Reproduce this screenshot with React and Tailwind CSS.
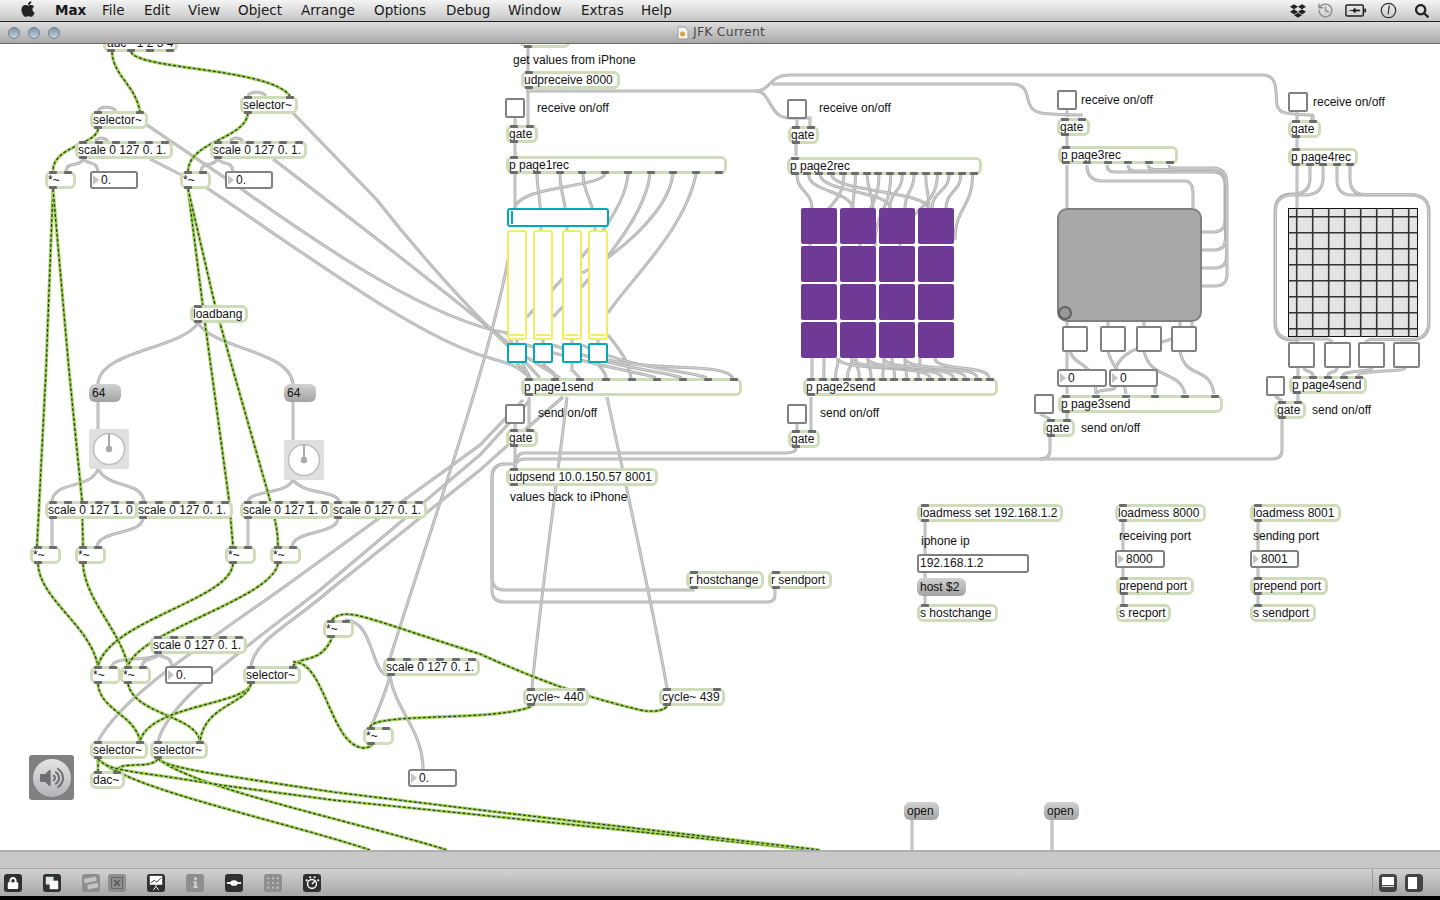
import React from "react";
import { FaApple, FaDropbox, FaLock, FaSearch, FaVolumeUp, FaInfo } from "react-icons/fa";
import { LuHistory } from "react-icons/lu";

// vertical-ish patch cord between two points
const v = (x1, y1, x2, y2, k = 0.5) => {
  const d = (y2 - y1) * k;
  return `M${x1} ${y1} C${x1} ${y1 + d} ${x2} ${y2 - d} ${x2} ${y2}`;
};

const signalCords = [
  "M112 52 C113 75 135 85 140 111",
  "M131 52 C140 70 270 68 290 96",
  "M98 129 C96 145 53 146 53 171",
  "M248 113 C245 140 190 140 188 171",
  "M53 189 L46 370 L37 546",
  "M53 189 L69 370 L82 500 L83 546",
  "M188 189 L205 323 L229 500 L233 546",
  "M188 189 L215 305 L233 370 L270 500 C275 520 278 530 278 546",
  "M38 564 C40 600 90 625 98 666",
  "M83 564 C85 600 120 630 128 666",
  "M233 564 C230 600 110 620 98 666",
  "M278 564 C270 600 140 630 128 666",
  "M98 684 C100 710 135 715 140 741",
  "M128 684 C135 715 195 715 200 741",
  "M251 684 C245 705 150 705 140 741",
  "M251 684 C245 705 205 705 200 741",
  "M293 666 C300 655 320 665 332 638",
  "M293 662 C325 660 330 745 363 748 C368 748 371 746 372 745",
  "M332 620 C345 605 370 620 480 654 C560 690 600 700 640 710 C655 713 665 710 667 706",
  "M370 727 C375 712 500 722 532 706",
  "M98 759 V771",
  "M158 759 C150 770 120 760 116 771",
  "M98 759 C130 790 280 820 370 850",
  "M158 759 C200 790 350 820 447 850",
  "M98 759 C110 772 130 770 220 785 L333 800 L480 815 L812 850",
  "M158 759 C170 768 200 772 333 792 L480 810 L820 850",
];

const greyCords = [
  "M528 44 V71", "M515 118 V125", "M515 143 V156", "M528 89 V125",
  "M528 89 V91 H755 C772 91 768 118 790 118 H810 V126",
  "M755 91 C772 91 768 75 790 75 H1262 C1280 75 1275 95 1277 105 C1279 115 1290 114 1312 115 V120",
  "M772 84 H1012 C1030 84 1026 100 1030 105 C1034 115 1045 114 1081 115 V117",
  "M515 174 V208", "M605 174 C600 188 520 185 515 208", "M537 174 C537 190 541 195 541 230",
  "M560 174 C560 195 567 200 567 230", "M583 174 C583 195 595 200 595 230",
  "M628 174 C625 220 560 280 527 317", "M650 174 C645 220 590 280 553 317",
  "M673 174 C668 215 610 260 582 273", "M696 174 C685 230 630 280 608 313",
  "M517 339 V343", "M543 339 V343", "M572 339 V343", "M598 339 V343",
  "M517 363 C520 370 529 370 529 378", "M543 363 C546 370 555 370 555 378",
  "M572 363 V370 L580 378", "M598 363 C600 370 606 370 606 378",
  "M608 335 C620 350 628 360 631 378", "M527 345 C600 368 640 372 656 378",
  "M553 345 C620 370 670 372 682 378", "M582 345 C640 372 690 370 707 378",
  "M608 360 C660 372 725 362 733 378",
  // long runs from the left column into page 1
  "M147 125 L240 188 C320 245 430 320 507 333 L530 378",
  "M150 159 L207 188 C300 250 420 340 490 358 C505 363 515 363 530 378",
  "M273 159 C340 210 430 280 507 342 L540 378",
  "M293 113 L377 200 C420 255 470 310 507 345 L560 378",
  "M390 658 C440 500 490 360 510 250",
  "M523 400 L480 445 L280 590 C180 660 120 700 98 741",
  "M530 400 L480 455 L320 590 C230 660 170 700 158 741",
  "M563 397 L525 430 L480 470 L330 590 C290 625 255 640 251 666",
  "M529 397 V429", "M515 424 V429", "M515 447 V468",
  "M567 397 C560 460 540 600 532 688", "M607 397 C625 480 655 620 667 688",
  "M796 448 Q796 453 786 453 H525 Q515 453 515 468",
  "M1050 437 V450 Q1050 459 1040 459 H525 Q515 459 515 468",
  "M1282 419 V450 Q1282 459 1272 459 H1040",
  "M693 589 V590 H505 Q492 590 492 577 V478 Q492 464 505 464 H515",
  "M775 589 V595 Q775 602 767 602 H505 Q492 602 492 590 V478 Q492 464 505 464",
  // left column
  "M198 323 C180 350 100 350 98 384", "M198 323 C215 350 290 350 293 384",
  "M98 402 V429", "M293 402 V440",
  "M98 469 C90 490 55 480 52 501", "M98 469 C110 490 140 480 144 501",
  "M293 480 C285 495 252 490 248 501", "M293 480 C305 495 335 490 339 501",
  "M52 519 V546", "M143 519 C140 535 100 530 97 546",
  "M248 519 V546", "M338 519 C335 535 295 530 292 546",
  "M83 159 C80 168 68 160 66 171", "M83 159 C90 166 96 160 98 171",
  "M217 159 C214 168 203 160 201 171", "M217 159 C224 166 231 160 233 171",
  "M158 654 C155 662 115 655 112 666", "M158 654 C155 662 145 655 142 666", "M158 654 C165 660 170 655 172 666",
  "M98 111 C100 106 112 106 116 111", "M248 96 C250 91 262 91 266 96",
  "M95 141 C98 137 104 137 108 141", "M230 141 C233 137 239 137 243 141",
  "M390 676 C385 695 378 710 371 727", "M390 676 C395 710 423 730 423 769",
  "M390 676 C370 676 375 620 345 620",
  // rest of page 2
  "M797 119 V126", "M796 144 V156", "M811 397 V430", "M797 424 V430",
  // page 3
  "M1067 110 V117", "M1067 136 V146", "M1067 165 V208", "M1067 322 V394",
  "M1087 165 Q1087 181 1103 181 H1185 Q1193 181 1193 195 V208",
  "M1107 165 Q1107 172 1115 172 H1213 Q1225 172 1225 185 V220 Q1225 232 1213 232 H1202",
  "M1128 165 Q1128 171 1136 171 H1213 Q1225.5 171 1225.5 185 V238 Q1225.5 250 1214 250 H1202",
  "M1148 165 Q1148 169.5 1156 169.5 H1213 Q1226.5 169.5 1226.5 185 V256 Q1226.5 268 1215 268 H1202",
  "M1169 165 Q1169 168 1175 168 H1213 Q1227 168 1227 185 V274 Q1227 286 1215 286 H1202",
  "M1108 322 V326", "M1144 322 V326", "M1180 322 V326", "M1192 322 V326",
  "M1070 351 C1075 368 1095 360 1096 394", "M1108 351 C1112 370 1124 370 1126 394",
  "M1144 351 C1150 380 1180 370 1185 394", "M1180 351 C1185 380 1210 365 1214 394",
  "M1172 339 C1150 347 1125 345 1115 369", "M1115 387 C1115 392 1098 388 1096 394", "M1155 387 V394",
  "M1040 414 L1050 419", "M1067 413 V419",
  // page 4
  "M1297 111 V120", "M1313 115 V120", "M1297 138 V148", "M1297 166 V342",
  "M1310 166 V178 Q1310 193 1295 194 H1292 Q1275 194 1275 212 V322 Q1275 340 1292 340 H1298",
  "M1323 166 V178 Q1323 195 1304 195 H1292 Q1275.5 195 1275.5 212 V322 Q1275.5 339 1292 339 H1328 L1333 342",
  "M1337 166 V180 Q1337 195 1352 195 H1410 Q1429 195 1429 212 V322 Q1429 340 1410 340 H1400",
  "M1350 166 V178 Q1350 194.5 1365 194.5 H1410 Q1428.5 194.5 1428.5 212 V322 Q1428.5 339.5 1410 339.5 H1370 L1365 342",
  "M1298 368 V376", "M1304 368 C1304 372 1313 370 1313 376", "M1337 368 C1337 374 1328 370 1328 376",
  "M1372 368 C1372 372 1343 370 1343 376", "M1405 368 C1405 372 1358 370 1358 376",
  "M1275 396 L1282 401", "M1298 394 V401",
  // text boxes on the right
  "M925 522 V554", "M925 573 V578", "M925 596 V604",
  "M1123 522 V550", "M1123 568 V577", "M1123 595 V604",
  "M1258 522 V550", "M1258 568 V577", "M1258 595 V604",
  "M912 820 V850", "M1052 820 V850",
];

// page 2: sixteen outlets fan out to the buttons and back in
const recTargets = [
  [812, 208], [852, 208], [890, 208], [928, 208], [810, 246], [853, 208], [873, 208], [860, 246],
  [875, 246], [890, 208], [905, 208], [929, 208], [900, 246], [932, 208], [946, 208], [955, 240],
];
recTargets.forEach(([x, y], i) => greyCords.push(v(797 + i * 11.7, 175, x, y)));
const sendSources = [812, 824, 838, 852, 856, 868, 884, 892, 905, 920, 838, 852, 868, 884, 905, 935];
sendSources.forEach((x, i) => {
  const to = 812 + i * 11.8;
  greyCords.push(`M${x} 358 C${x} 372 ${to} 364 ${to} 378`);
});

const Ports = ({ n, side }) => (
  <div className={`absolute left-[1px] right-[1px] flex justify-between ${side === "top" ? "-top-[3px]" : "-bottom-[3px]"}`}>
    {Array.from({ length: n }).map((_, i) => (
      <span key={i} className="block w-[8px] h-[3px] rounded-[1px] bg-[#6b6b6b]" />
    ))}
  </div>
);

const Obj = ({ t, c, i = 1, o = 1 }) => (
  <div className={`absolute box-border h-[18px] bg-white border-[3px] border-[#cfdcb9] rounded-[6px] flex items-center whitespace-nowrap overflow-visible text-[12px] leading-none text-[#111] ${c}`}>
    <Ports n={i} side="top" />
    {o > 0 && <Ports n={o} side="bottom" />}
    <span>{t}</span>
  </div>
);

const Num = ({ t, c }) => (
  <div className={`absolute box-border h-[18px] bg-white border-2 border-[#808080] rounded-[3px] flex items-center whitespace-nowrap text-[12px] leading-none text-[#111] ${c}`}>
    <span className="block ml-[1px] mr-[2px] border-y-[5px] border-l-[6px] border-y-transparent border-l-[#c4c4c4]" />
    {t}
  </div>
);

const Msg = ({ t, c }) => (
  <div className={`absolute h-[18px] rounded-[6px] bg-linear-to-b from-[#d2d2d2] to-[#a2a2a2] flex items-center pl-[3px] text-[12px] leading-none text-[#111] ${c}`}>{t}</div>
);

const Toggle = ({ c }) => (
  <div className={`absolute box-border bg-white border-2 border-[#808080] rounded-[2px] ${c}`} />
);

const Label = ({ t, c }) => (
  <div className={`absolute text-[12px] leading-none whitespace-nowrap text-[#111] ${c}`}>{t}</div>
);

const Dial = ({ c }) => (
  <div className={`absolute w-[40px] h-[40px] rounded-[2px] bg-[#e0e0e0] ${c}`}>
    <svg viewBox="0 0 40 40" className="w-full h-full">
      <circle cx="20" cy="20" r="15.5" fill="#fff" stroke="#bdbdbd" strokeWidth="1.5" />
      <line x1="20" y1="20" x2="20" y2="5" stroke="#a8a8a8" strokeWidth="2" />
      <circle cx="20" cy="20" r="3.2" fill="#a8a8a8" />
    </svg>
  </div>
);

const Slider = ({ c }) => (
  <div className={`absolute box-border w-[20px] h-[110px] top-[230px] bg-white border-2 border-[#f0ee60] rounded-[3px] ${c}`}>
    <div className="absolute left-[1px] right-[1px] bottom-[2px] h-[2px] bg-[#f0ee60]" />
  </div>
);

const CyanBox = ({ c }) => (
  <div className={`absolute box-border w-[20px] h-[20px] top-[343px] bg-white border-2 border-[#00a8b8] rounded-[2px] ${c}`} />
);

const Pad = ({ c }) => <div className={`absolute w-[36px] h-[36px] rounded-[2px] bg-[#6e3a96] ${c}`} />;

const MenuItems = [
  ["File", "w-[42px]"], ["Edit", "w-[44px]"], ["View", "w-[50px]"], ["Object", "w-[63px]"], ["Arrange", "w-[73px]"],
  ["Options", "w-[72px]"], ["Debug", "w-[62px]"], ["Window", "w-[73px]"], ["Extras", "w-[60px]"], ["Help", "w-[50px]"],
];

const ToolIcon = ({ dim, children, c = "" }) => (
  <div className={`w-[18px] h-[18px] rounded-[3px] flex items-center justify-center text-white ${dim ? "bg-[#8e8e8e]" : "bg-[#303030]"} ${c}`}>
    {children}
  </div>
);

function MatrixGrid() {
  const lines = [8.7, 24.7, 40.7, 56.7, 72.7, 88.7, 104.7, 120.7];
  return (
    <svg viewBox="0 0 130 129" className="absolute left-[1288px] top-[208px] w-[130px] h-[129px]">
      <rect x="0.5" y="0.5" width="129" height="128" fill="#e4e4e4" stroke="#111" />
      {lines.map((p) => (
        <g key={p} stroke="#333" strokeWidth="1.6">
          <line x1={p} y1="0" x2={p} y2="129" />
          <line x1="0" y1={p} x2="130" y2={p} />
        </g>
      ))}
    </svg>
  );
}

export default function App() {
  return (
    <div className="w-[1440px] h-[900px] flex flex-col overflow-hidden bg-white font-['Liberation_Sans',Arial,sans-serif]">
      {/* menu bar */}
      <div className="relative z-10 h-[22px] shrink-0 flex items-center bg-linear-to-b from-[#f4f4f4] to-[#c6c6c6] border-b border-[#222] font-['DejaVu_Sans',sans-serif] text-[13.5px] text-[#1a1a1a]">
        <FaApple className="ml-[19px] text-[18px] text-[#222] -mt-[3px]" />
        <span className="ml-[18px] w-[47px] font-bold">Max</span>
        {MenuItems.map(([t, w]) => (
          <span key={t} className={w}>{t}</span>
        ))}
        <div className="ml-auto flex items-center gap-[11px] pr-[11px]">
          <FaDropbox className="text-[16px] text-[#222]" />
          <LuHistory className="text-[17px] text-[#8a8a8a]" />
          <svg viewBox="0 0 24 14" className="w-[22px] h-[13px] mr-[1px]">
            <rect x="1" y="1" width="19" height="12" rx="1.5" fill="none" stroke="#222" strokeWidth="1.6" />
            <rect x="21" y="5" width="2" height="4" fill="#222" />
            <path d="M5 7h3l3-2.5v2h5v1h-5v2L8 7" fill="#222" stroke="#222" />
          </svg>
          <svg viewBox="0 0 18 18" className="w-[17px] h-[17px] ml-[1px]">
            <circle cx="9" cy="9" r="7.6" fill="none" stroke="#333" strokeWidth="1.3" />
            <path d="M9.8 3.5 L8.6 13" stroke="#333" strokeWidth="1.3" />
          </svg>
          <FaSearch className="ml-[7px] text-[14px] text-[#222]" />
        </div>
      </div>

      {/* window title */}
      <div className="relative z-10 h-[22px] shrink-0 flex items-center bg-linear-to-b from-[#dedede] to-[#a9a9a9] border-b border-[#6a6a6a]">
        <div className="flex gap-[8px] pl-[8px]">
          {[1, 2, 3].map((k) => (
            <span key={k} className="block w-[12px] h-[12px] rounded-full border border-[#6f7c88] bg-linear-to-b from-[#7f94a8] to-[#c4d4e0]" />
          ))}
        </div>
        <div className="flex items-center gap-[4px] ml-[617px] font-['DejaVu_Sans',sans-serif] text-[12.5px] tracking-[0.2px] text-[#4a4a4a]">
          <svg viewBox="0 0 12 14" className="w-[12px] h-[14px]">
            <path d="M1 1h7l3 3v9H1z" fill="#f4f4f4" stroke="#999" />
            <circle cx="5.5" cy="8" r="2.5" fill="#e0a040" />
          </svg>
          JFK Current
        </div>
      </div>

      {/* patcher canvas */}
      <div className="relative flex-1 overflow-hidden bg-white">
        <div className="absolute left-0 -top-[44px] w-[1440px] h-[900px]">
          <svg viewBox="0 0 1440 900" className="absolute left-0 top-0 w-[1440px] h-[900px]" fill="none">
            {greyCords.map((d, i) => (
              <g key={i}>
                <path d={d} stroke="#b2b2b2" strokeWidth="3" />
                <path d={d} stroke="#d6d6d6" strokeWidth="1" />
              </g>
            ))}
            {signalCords.map((d, i) => (
              <g key={i}>
                <path d={d} stroke="#a2d45c" strokeWidth="3.2" />
                <path d={d} stroke="#2f3a28" strokeWidth="1.3" strokeDasharray="3 2" />
              </g>
            ))}
          </svg>

          <Obj t="adc~ 1 2 3 4" c="left-[103px] top-[34px] w-[75px] px-[1px]" i={0} o={4} />
          <Obj t="selector~" c="left-[90px] top-[111px] w-[58px]" i={2} />
          <Obj t="selector~" c="left-[240px] top-[96px] w-[58px]" i={2} />
          <Obj t="scale 0 127 0. 1." c="left-[75px] top-[141px] w-[98px]" i={6} />
          <Obj t="scale 0 127 0. 1." c="left-[210px] top-[141px] w-[97px]" i={6} />
          <Obj t="*~" c="left-[45px] top-[171px] w-[31px]" i={2} />
          <Num t="0." c="left-[90px] top-[171px] w-[48px]" />
          <Obj t="*~" c="left-[180px] top-[171px] w-[31px]" i={2} />
          <Num t="0." c="left-[225px] top-[171px] w-[48px]" />

          <Obj t="loadbang" c="left-[190px] top-[305px] w-[58px]" />
          <Msg t="64" c="left-[89px] top-[384px] w-[32px]" />
          <Msg t="64" c="left-[284px] top-[384px] w-[32px]" />
          <Dial c="left-[89px] top-[429px]" />
          <Dial c="left-[284px] top-[440px]" />
          <Obj t="scale 0 127 1. 0" c="left-[45px] top-[501px] w-[93px]" i={6} />
          <Obj t="scale 0 127 0. 1." c="left-[135px] top-[501px] w-[98px]" i={6} />
          <Obj t="scale 0 127 1. 0" c="left-[240px] top-[501px] w-[93px]" i={6} />
          <Obj t="scale 0 127 0. 1." c="left-[330px] top-[501px] w-[97px]" i={6} />
          <Obj t="*~" c="left-[30px] top-[546px] w-[31px]" i={2} />
          <Obj t="*~" c="left-[75px] top-[546px] w-[31px]" i={2} />
          <Obj t="*~" c="left-[225px] top-[546px] w-[31px]" i={2} />
          <Obj t="*~" c="left-[270px] top-[546px] w-[31px]" i={2} />

          <Obj t="scale 0 127 0. 1." c="left-[150px] top-[636px] w-[97px]" i={6} />
          <Obj t="*~" c="left-[90px] top-[666px] w-[31px]" i={2} />
          <Obj t="*~" c="left-[120px] top-[666px] w-[31px]" i={2} />
          <Num t="0." c="left-[165px] top-[666px] w-[48px]" />
          <Obj t="selector~" c="left-[243px] top-[666px] w-[58px]" i={2} />
          <Obj t="*~" c="left-[323px] top-[620px] w-[31px]" i={2} />
          <Obj t="scale 0 127 0. 1." c="left-[383px] top-[658px] w-[97px]" i={6} />
          <Obj t="*~" c="left-[363px] top-[727px] w-[31px]" i={2} />
          <Num t="0." c="left-[408px] top-[769px] w-[49px]" />
          <Obj t="selector~" c="left-[90px] top-[741px] w-[58px]" i={2} />
          <Obj t="selector~" c="left-[150px] top-[741px] w-[58px]" i={2} />
          <Obj t="dac~" c="left-[90px] top-[771px] w-[35px]" i={2} o={0} />
          <div className="absolute left-[29px] top-[755px] w-[45px] h-[45px] rounded-[3px] bg-[#808080] flex items-center justify-center">
            <div className="w-[38px] h-[38px] rounded-full bg-linear-to-b from-[#e4e4e4] to-[#b4b4b8] flex items-center justify-center">
              <FaVolumeUp className="text-[24px] text-[#6e6e6e]" />
            </div>
          </div>

          {/* page 1 */}
          <Obj t="" c="left-[520px] top-[30px] w-[50px]" i={0} o={1} />
          <Label t="get values from iPhone" c="left-[513px] top-[54px]" />
          <Obj t="udpreceive 8000" c="left-[521px] top-[71px] w-[99px]" />
          <Toggle c="left-[505px] top-[98px] w-[20px] h-[20px]" />
          <Label t="receive on/off" c="left-[537px] top-[102px]" />
          <Obj t="gate" c="left-[506px] top-[125px] w-[32px]" i={2} />
          <Obj t="p page1rec" c="left-[506px] top-[156px] w-[221px]" o={10} />
          <div className="absolute box-border left-[507px] top-[208px] w-[102px] h-[19px] bg-white border-2 border-[#00a8b8] rounded-[3px]">
            <div className="absolute left-[2px] top-[1px] bottom-[1px] w-[2px] bg-[#00a8b8]" />
          </div>
          <Slider c="left-[507px]" />
          <Slider c="left-[533px]" />
          <Slider c="left-[562px]" />
          <Slider c="left-[588px]" />
          <CyanBox c="left-[507px]" />
          <CyanBox c="left-[533px]" />
          <CyanBox c="left-[562px]" />
          <CyanBox c="left-[588px]" />
          <Obj t="p page1send" c="left-[521px] top-[378px] w-[221px]" i={9} />
          <Toggle c="left-[505px] top-[404px] w-[20px] h-[20px]" />
          <Label t="send on/off" c="left-[538px] top-[407px]" />
          <Obj t="gate" c="left-[506px] top-[429px] w-[32px]" i={2} />
          <Obj t="udpsend 10.0.150.57 8001" c="left-[506px] top-[468px] w-[152px]" />
          <Label t="values back to iPhone" c="left-[510px] top-[491px]" />
          <Obj t="r hostchange" c="left-[686px] top-[571px] w-[78px]" />
          <Obj t="r sendport" c="left-[768px] top-[571px] w-[64px]" />
          <Obj t="cycle~ 440" c="left-[523px] top-[688px] w-[66px]" i={2} />
          <Obj t="cycle~ 439" c="left-[659px] top-[688px] w-[66px]" i={2} />

          {/* page 2 */}
          <Toggle c="left-[787px] top-[99px] w-[20px] h-[20px]" />
          <Label t="receive on/off" c="left-[819px] top-[102px]" />
          <Obj t="gate" c="left-[788px] top-[126px] w-[31px]" i={2} />
          <Obj t="p page2rec" c="left-[787px] top-[157px] w-[195px]" o={16} />
          <Pad c="left-[801px] top-[208px]" /><Pad c="left-[840px] top-[208px]" /><Pad c="left-[879px] top-[208px]" /><Pad c="left-[918px] top-[208px]" />
          <Pad c="left-[801px] top-[246px]" /><Pad c="left-[840px] top-[246px]" /><Pad c="left-[879px] top-[246px]" /><Pad c="left-[918px] top-[246px]" />
          <Pad c="left-[801px] top-[284px]" /><Pad c="left-[840px] top-[284px]" /><Pad c="left-[879px] top-[284px]" /><Pad c="left-[918px] top-[284px]" />
          <Pad c="left-[801px] top-[322px]" /><Pad c="left-[840px] top-[322px]" /><Pad c="left-[879px] top-[322px]" /><Pad c="left-[918px] top-[322px]" />
          <Obj t="p page2send" c="left-[803px] top-[378px] w-[195px]" i={16} />
          <Toggle c="left-[787px] top-[404px] w-[20px] h-[20px]" />
          <Label t="send on/off" c="left-[820px] top-[407px]" />
          <Obj t="gate" c="left-[788px] top-[430px] w-[32px]" i={2} />

          {/* page 3 */}
          <Toggle c="left-[1057px] top-[90px] w-[20px] h-[20px]" />
          <Label t="receive on/off" c="left-[1081px] top-[94px]" />
          <Obj t="gate" c="left-[1057px] top-[118px] w-[33px]" i={2} />
          <Obj t="p page3rec" c="left-[1058px] top-[146px] w-[120px]" o={6} />
          <div className="absolute box-border left-[1057px] top-[208px] w-[145px] h-[114px] bg-[#a8a8a8] border-2 border-[#808080] rounded-[10px]">
            <div className="absolute -left-[1px] bottom-0 w-[14px] h-[14px] rounded-full border-2 border-[#606060] bg-[#989898]" />
          </div>
          <Toggle c="left-[1062px] top-[326px] w-[26px] h-[26px]" />
          <Toggle c="left-[1100px] top-[326px] w-[26px] h-[26px]" />
          <Toggle c="left-[1136px] top-[326px] w-[26px] h-[26px]" />
          <Toggle c="left-[1171px] top-[326px] w-[26px] h-[26px]" />
          <Num t="0" c="left-[1057px] top-[369px] w-[50px]" />
          <Num t="0" c="left-[1109px] top-[369px] w-[49px]" />
          <Obj t="p page3send" c="left-[1058px] top-[395px] w-[165px]" i={6} />
          <Toggle c="left-[1034px] top-[394px] w-[20px] h-[20px]" />
          <Obj t="gate" c="left-[1043px] top-[419px] w-[32px]" i={2} />
          <Label t="send on/off" c="left-[1081px] top-[422px]" />

          {/* page 4 */}
          <Toggle c="left-[1288px] top-[92px] w-[20px] h-[20px]" />
          <Label t="receive on/off" c="left-[1313px] top-[96px]" />
          <Obj t="gate" c="left-[1288px] top-[120px] w-[33px]" i={2} />
          <Obj t="p page4rec" c="left-[1288px] top-[148px] w-[70px]" o={5} />
          <MatrixGrid />
          <Toggle c="left-[1288px] top-[342px] w-[27px] h-[26px]" />
          <Toggle c="left-[1324px] top-[342px] w-[27px] h-[26px]" />
          <Toggle c="left-[1358px] top-[342px] w-[27px] h-[26px]" />
          <Toggle c="left-[1393px] top-[342px] w-[27px] h-[26px]" />
          <Obj t="p page4send" c="left-[1289px] top-[376px] w-[78px]" i={5} />
          <Toggle c="left-[1266px] top-[376px] w-[19px] h-[20px]" />
          <Obj t="gate" c="left-[1274px] top-[401px] w-[32px]" i={2} />
          <Label t="send on/off" c="left-[1312px] top-[404px]" />

          {/* network setup */}
          <Obj t="loadmess set 192.168.1.2" c="left-[917px] top-[504px] w-[146px]" />
          <Label t="iphone ip" c="left-[921px] top-[535px]" />
          <div className="absolute box-border left-[917px] top-[554px] w-[112px] h-[19px] bg-white border-2 border-[#808080] rounded-[3px] flex items-center pl-[1px] pb-[1px] text-[12px] leading-none text-[#111]">192.168.1.2</div>
          <Msg t="host $2" c="left-[917px] top-[578px] w-[49px]" />
          <Obj t="s hostchange" c="left-[917px] top-[604px] w-[81px]" o={0} />
          <Obj t="loadmess 8000" c="left-[1115px] top-[504px] w-[91px]" />
          <Label t="receiving port" c="left-[1119px] top-[530px]" />
          <Num t="8000" c="left-[1115px] top-[550px] w-[50px]" />
          <Obj t="prepend port" c="left-[1116px] top-[577px] w-[78px]" />
          <Obj t="s recport" c="left-[1116px] top-[604px] w-[55px]" o={0} />
          <Obj t="loadmess 8001" c="left-[1250px] top-[504px] w-[91px]" />
          <Label t="sending port" c="left-[1253px] top-[530px]" />
          <Num t="8001" c="left-[1250px] top-[550px] w-[49px]" />
          <Obj t="prepend port" c="left-[1250px] top-[577px] w-[78px]" />
          <Obj t="s sendport" c="left-[1250px] top-[604px] w-[66px]" o={0} />
          <Msg t="open" c="left-[904px] top-[802px] w-[35px]" />
          <Msg t="open" c="left-[1044px] top-[802px] w-[35px]" />
        </div>
      </div>

      {/* bottom toolbar */}
      <div className="relative z-10 shrink-0 h-[19px] bg-[#c8c8c8] border-t-2 border-[#b0b0b0] border-b border-b-[#aaaaaa]" />
      <div className="relative z-10 shrink-0 h-[27px] flex items-center pl-[4px] gap-[21px] bg-linear-to-b from-[#d2d2d2] to-[#a6a6a6]">
        <ToolIcon><FaLock className="text-[12px]" /></ToolIcon>
        <ToolIcon>
          <svg viewBox="0 0 18 18" className="w-[14px] h-[14px]"><rect x="1" y="1" width="10" height="10" fill="#dfe8e4" /><rect x="6" y="6" width="11" height="11" fill="#fff" /></svg>
        </ToolIcon>
        <ToolIcon dim>
          <svg viewBox="0 0 18 18" className="w-[16px] h-[16px]"><rect x="1" y="3" width="14" height="5" fill="#c4c4c4" transform="rotate(-12 8 5)" /><rect x="5" y="10" width="12" height="5" fill="#c4c4c4" transform="rotate(-12 11 12)" /></svg>
        </ToolIcon>
        <ToolIcon dim c="-ml-[13px]">
          <svg viewBox="0 0 18 18" className="w-[12px] h-[12px]"><rect x="1" y="1" width="16" height="16" fill="none" stroke="#555" strokeWidth="1" /><path d="M5 5l8 8M13 5l-8 8" stroke="#555" strokeWidth="2.2" /></svg>
        </ToolIcon>
        <ToolIcon>
          <svg viewBox="0 0 18 18" className="w-[16px] h-[16px]"><rect x="2" y="1" width="14" height="10" fill="#fff" /><path d="M3 9l4-3 3 2 5-5" stroke="#333" fill="none" /><path d="M9 11v2M9 13l-3 4M9 13l3 4" stroke="#fff" /></svg>
        </ToolIcon>
        <ToolIcon dim><FaInfo className="text-[11px] text-[#d0d0d0]" /></ToolIcon>
        <ToolIcon>
          <svg viewBox="0 0 18 18" className="w-[16px] h-[16px]"><rect x="1" y="8" width="16" height="2" fill="#fff" /><ellipse cx="9" cy="9" rx="4.2" ry="3.2" fill="#fff" /></svg>
        </ToolIcon>
        <ToolIcon dim>
          <svg viewBox="0 0 18 18" className="w-[14px] h-[14px]" fill="#c4c4c4">
            {[3, 9, 15].map((x) => [3, 9, 15].map((y) => <circle key={`${x}-${y}`} cx={x} cy={y} r="1.4" />))}
          </svg>
        </ToolIcon>
        <ToolIcon>
          <svg viewBox="0 0 18 18" className="w-[16px] h-[16px]" fill="#fff">
            <circle cx="9" cy="10" r="5" fill="none" stroke="#fff" strokeWidth="1.6" />
            <path d="M9 10l3-3" stroke="#fff" strokeWidth="1.6" />
            <circle cx="3" cy="6" r="1.2" /><circle cx="7" cy="2.5" r="1.2" /><circle cx="12" cy="2.5" r="1.2" /><circle cx="16" cy="6" r="1.2" />
          </svg>
        </ToolIcon>
        <div className="ml-auto flex items-center gap-[8px] pr-[17px]">
          <div className="w-px h-[27px] bg-[#999] mr-[-2px]" />
          <div className="w-[18px] h-[18px] rounded-[4px] bg-[#444] p-[3px]">
            <div className="w-full h-[8px] bg-white" />
            <div className="w-full h-[1px] mt-[1px] bg-[#ddd]" />
          </div>
          <div className="w-[18px] h-[18px] rounded-[4px] bg-[#444] py-[3px] px-[3px]">
            <div className="w-[9px] h-full bg-white" />
          </div>
        </div>
      </div>
      <div className="shrink-0 h-[4px] bg-black" />
    </div>
  );
}
